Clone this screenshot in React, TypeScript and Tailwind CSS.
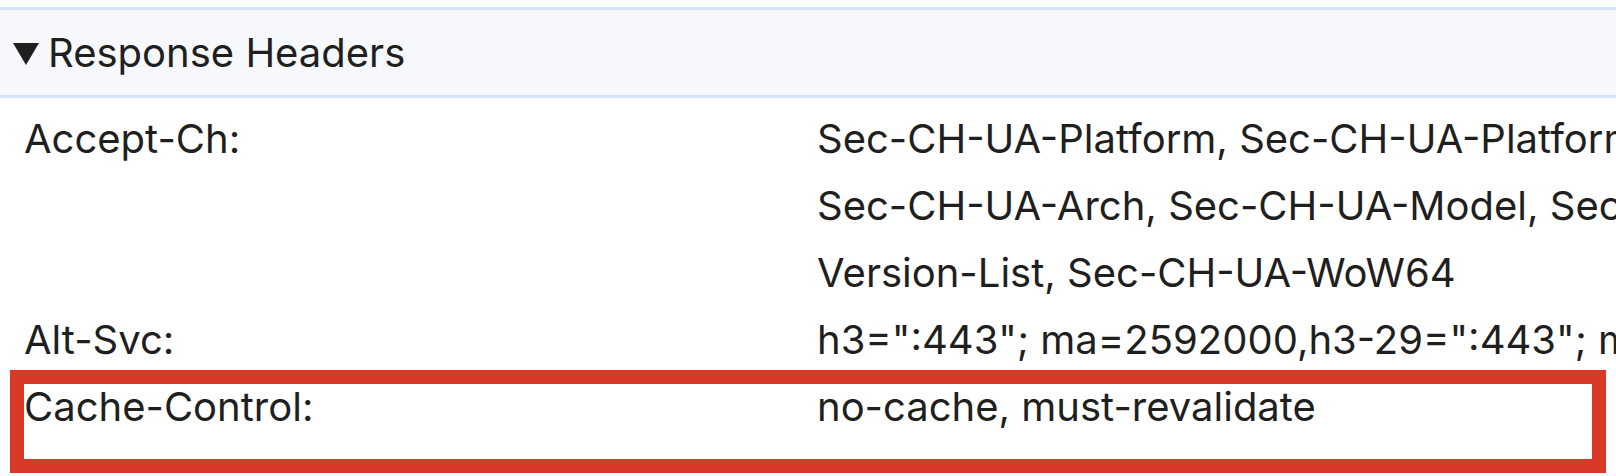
import React from "react";

const rows: { name: string; lines: string[] }[] = [
  {
    name: "Accept-Ch:",
    lines: [
      "Sec-CH-UA-Platform, Sec-CH-UA-Platform-Version, Sec-CH-UA-Full-Version,",
      "Sec-CH-UA-Arch, Sec-CH-UA-Model, Sec-CH-UA-Bitness, Sec-CH-UA-Full-",
      "Version-List, Sec-CH-UA-WoW64",
    ],
  },
  {
    name: "Alt-Svc:",
    lines: ['h3=":443"; ma=2592000,h3-29=":443"; ma=2592000'],
  },
  {
    name: "Cache-Control:",
    lines: ["no-cache, must-revalidate"],
  },
];

export default function App() {
  return (
    <div
      className="relative w-full h-[476px] overflow-hidden bg-white pt-[7px] text-[#1f1f1f]"
      style={{ fontFamily: "Inter, 'Liberation Sans', sans-serif" }}
    >
      <div className="flex h-[91px] items-center border-y-[3px] border-[#d7e3fa] bg-[#f6f8fc] pl-[13px]">
        <svg width="26" height="22" viewBox="0 0 26 22" className="mt-[3px]">
          <path d="M0 0 H26 L13 22 Z" fill="#1f1f1f" />
        </svg>
        <span className="ml-[9px] text-[40px] leading-none whitespace-nowrap">
          Response Headers
        </span>
      </div>

      <div className="pt-[7px]">
        {rows.map((row) => (
          <div key={row.name} className="flex text-[40px] leading-[67px] whitespace-nowrap">
            <div className="w-[817px] shrink-0 pl-[24px]">{row.name}</div>
            <div>
              {row.lines.map((l) => (
                <div key={l}>{l}</div>
              ))}
            </div>
          </div>
        ))}
      </div>

      <div className="pointer-events-none absolute left-[10px] top-[370px] h-[103px] w-[1596px] border-[14px] border-[#d83a27]" />
    </div>
  );
}
